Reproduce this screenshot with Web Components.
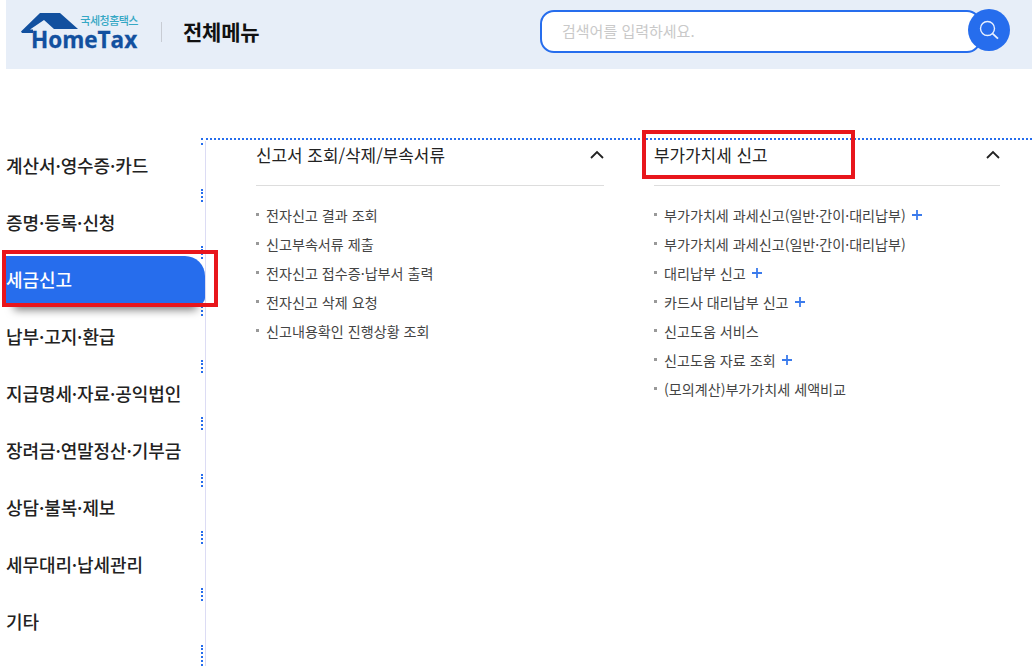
<!DOCTYPE html>
<html lang="ko">
<head>
<meta charset="utf-8">
<title>전체메뉴</title>
<style>
  html, body { margin: 0; background: #fff; height: 666px; overflow: hidden; }
  body { font-family: "Noto Sans CJK KR", "Noto Sans", sans-serif; color: #222; }
</style>
</head>
<body>
<menu-page></menu-page>

<script>
class HomeLogo extends HTMLElement {
  constructor() {
    super();
    this.attachShadow({ mode: "open" }).innerHTML = `
    <style>
      :host { display: block; width: 117px; height: 37px; position: relative; flex: none; }
      svg { position: absolute; left: 0; top: 0; }
      .sub { position: absolute; right: 0; top: 1px; font: 500 11px/13px "Noto Sans CJK KR", sans-serif; color: #35a7c4; letter-spacing: -.5px; }
      .name { position: absolute; left: 10px; top: 14px; font: 700 22.5px/25px "Open Sans", "Liberation Sans", sans-serif; color: #12509f; white-space: nowrap; -webkit-text-stroke: .3px #12509f; }
    </style>
    <svg width="117" height="37" viewBox="0 0 117 37">
      <path d="M0 18.5 L19 0 H39 L57 16 H33 L23 7 L9 16.5 H12 V20 H1 Z" fill="#12509f"/>
    </svg>
    <span class="sub">국세청홈택스</span>
    <span class="name">HomeTax</span>`;
  }
}
customElements.define("home-logo", HomeLogo);

class SearchBox extends HTMLElement {
  constructor() {
    super();
    this.attachShadow({ mode: "open" }).innerHTML = `
    <style>
      :host { display: flex; align-items: flex-start; width: 470px; height: 44px; position: relative; flex: none; }
      .field { width: 441px; height: 43px; margin-top: 1px; box-sizing: border-box; background: #fff; border: 2px solid #266ded; border-radius: 14px; padding: 0 0 2px 20px; display: flex; align-items: center; font-size: 15px; color: #c9c9c9; }
      button { position: absolute; right: 0; top: 0; width: 42px; height: 42px; border: 0; padding: 0; border-radius: 50%; background: #266ded; display: flex; align-items: center; justify-content: center; }
    </style>
    <div class="field">검색어를 입력하세요.</div>
    <button aria-label="검색">
      <svg width="22" height="22" viewBox="0 0 22 22" fill="none" stroke="#e8f0ff" stroke-width="1.4">
        <circle cx="9.5" cy="9.5" r="7"/><path d="M14.6 14.6 L20 19.6" stroke-width="1.8"/>
      </svg>
    </button>`;
  }
}
customElements.define("search-box", SearchBox);

class AppHeader extends HTMLElement {
  constructor() {
    super();
    this.attachShadow({ mode: "open" }).innerHTML = `
    <style>
      :host { display: flex; align-items: center; height: 69px; margin-left: 6px; background: #e7eef8; padding: 0 22px 0 15px; box-sizing: border-box; }
      .bar { width: 1px; height: 20px; background: #c8ccd4; margin: -5px 21px 0 23px; }
      h1 { margin: -7px 0 0; font-size: 21px; font-weight: 700; color: #111; flex: 1; letter-spacing: -.2px; }
      home-logo { margin-top: -6px; }
      search-box { margin-top: -7px; }
    </style>
    <home-logo></home-logo>
    <span class="bar"></span>
    <h1>전체메뉴</h1>
    <search-box></search-box>`;
  }
}
customElements.define("app-header", AppHeader);

class SideItem extends HTMLElement {
  constructor() {
    super();
    this.attachShadow({ mode: "open" }).innerHTML = `
    <style>
      :host { display: flex; align-items: center; height: 57px; font-size: 18px; font-weight: 500; color: #222; position: relative; padding-left: 6px; white-space: nowrap; letter-spacing: -.1px; }
      :host::after { content: ""; position: absolute; right: 2px; top: 52px; height: 13px; border-right: 2px dotted #266ded; }
      :host([last])::after { height: 21px; }
      :host([active]) .tab { background: #266ded; color: #fff; box-shadow: 0 14px 8px -8px rgba(0,0,0,.5); }
      .tab { flex: 1; height: 48px; box-sizing: border-box; padding-bottom: 2px; display: flex; align-items: center; border-radius: 0 20px 6px 0; position: relative; z-index: 1; }
    </style>
    <div class="tab"><slot></slot></div>`;
  }
}
customElements.define("side-item", SideItem);

class SideMenu extends HTMLElement {
  constructor() {
    super();
    this.attachShadow({ mode: "open" }).innerHTML = `
    <style>
      :host { display: block; width: 206px; box-sizing: border-box; border-right: 1px solid #dcdcf4; height: 525px; margin-top: 3px; flex: none; }
      ::slotted(:first-child) { margin-top: -4px; }
    </style>
    <slot></slot>`;
  }
}
customElements.define("side-menu", SideMenu);

class MenuLink extends HTMLElement {
  constructor() {
    super();
    const plus = this.hasAttribute("plus") ? `<svg class="plus" width="10" height="10" viewBox="0 0 10 10"><path d="M5 0V10M0 5H10" stroke="#3b7bec" stroke-width="1.8"/></svg>` : "";
    this.attachShadow({ mode: "open" }).innerHTML = `
    <style>
      :host { display: flex; align-items: center; height: 29px; font-size: 14.1px; color: #444; white-space: nowrap; }
      .dot { width: 3px; height: 3px; background: #999; margin-right: 7px; }
      .plus { margin-left: 6px; }
    </style>
    <span class="dot"></span><slot></slot>${plus}`;
  }
}
customElements.define("menu-link", MenuLink);

class MenuColumn extends HTMLElement {
  constructor() {
    super();
    this.attachShadow({ mode: "open" }).innerHTML = `
    <style>
      :host { display: block; }
      header { display: flex; align-items: center; justify-content: space-between; height: 48px; border-bottom: 1px solid #ddd; box-sizing: border-box; margin-bottom: 14px; }
      h2 { margin: -14px 0 0; font-size: 16.9px; font-weight: 400; color: #222; }
      svg { margin: -14px 0 0; }
    </style>
    <header>
      <h2>${this.getAttribute("title")}</h2>
      <svg width="14" height="9" viewBox="0 0 14 9" fill="none" stroke="#222" stroke-width="1.8"><path d="M1 8 L7 2 L13 8"/></svg>
    </header>
    <slot></slot>`;
  }
}
customElements.define("menu-column", MenuColumn);

class MenuPage extends HTMLElement {
  constructor() {
    super();
    this.attachShadow({ mode: "open" }).innerHTML = `
    <style>
      :host { display: block; position: relative; height: 666px; overflow: hidden; }
      .line { position: absolute; left: 201px; right: 0; top: 138px; border-top: 2px dotted #266ded; }
      .corner { position: absolute; left: 201px; top: 138px; height: 7px; border-left: 2px dotted #266ded; }
      .content { display: grid; grid-template-columns: 348px 346px; column-gap: 50px; padding: 0 0 0 50px; }
      .wrap { display: flex; margin-top: 69px; }
      .red { position: absolute; box-sizing: border-box; border: 4px solid #e8161c; z-index: 2; }
      .r1 { left: 2px; top: 250px; width: 216px; height: 57px; }
      .r2 { left: 642px; top: 130px; width: 213px; height: 49px; }
    </style>
    <app-header></app-header>
    <div class="wrap">
      <side-menu>
        <side-item>계산서·영수증·카드</side-item>
        <side-item>증명·등록·신청</side-item>
        <side-item active>세금신고</side-item>
        <side-item>납부·고지·환급</side-item>
        <side-item>지급명세·자료·공익법인</side-item>
        <side-item>장려금·연말정산·기부금</side-item>
        <side-item>상담·불복·제보</side-item>
        <side-item>세무대리·납세관리</side-item>
        <side-item last>기타</side-item>
      </side-menu>
      <div class="content">
        <menu-column title="신고서 조회/삭제/부속서류">
          <menu-link>전자신고 결과 조회</menu-link>
          <menu-link>신고부속서류 제출</menu-link>
          <menu-link>전자신고 접수증·납부서 출력</menu-link>
          <menu-link>전자신고 삭제 요청</menu-link>
          <menu-link>신고내용확인 진행상황 조회</menu-link>
        </menu-column>
        <menu-column title="부가가치세 신고">
          <menu-link plus>부가가치세 과세신고(일반·간이·대리납부)</menu-link>
          <menu-link>부가가치세 과세신고(일반·간이·대리납부)</menu-link>
          <menu-link plus>대리납부 신고</menu-link>
          <menu-link plus>카드사 대리납부 신고</menu-link>
          <menu-link>신고도움 서비스</menu-link>
          <menu-link plus>신고도움 자료 조회</menu-link>
          <menu-link>(모의계산)부가가치세 세액비교</menu-link>
        </menu-column>
      </div>
    </div>
    <div class="line"></div>
    <div class="corner"></div>
    <div class="red r1"></div>
    <div class="red r2"></div>`;
  }
}
customElements.define("menu-page", MenuPage);
</script>
</body>
</html>
